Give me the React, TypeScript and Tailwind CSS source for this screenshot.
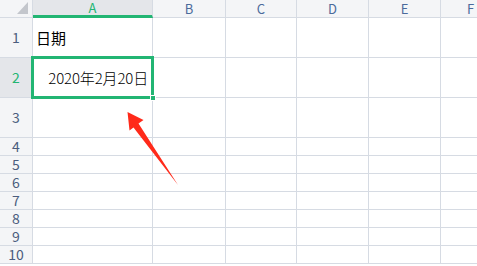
import React from "react";

const cols = [
  { name: "A", w: 120 },
  { name: "B", w: 73 },
  { name: "C", w: 71 },
  { name: "D", w: 72 },
  { name: "E", w: 72 },
  { name: "F", w: 60 },
];

const rows = [
  { n: 1, h: 40 },
  { n: 2, h: 40 },
  { n: 3, h: 40 },
  { n: 4, h: 18 },
  { n: 5, h: 18 },
  { n: 6, h: 18 },
  { n: 7, h: 18 },
  { n: 8, h: 18 },
  { n: 9, h: 18 },
  { n: 10, h: 18 },
];

const font = { fontFamily: '"Noto Sans CJK SC", "Noto Sans", sans-serif' };

export default function App() {
  return (
    <div className="relative w-[477px] h-[266px] overflow-hidden bg-white" style={font}>
      {/* header row */}
      <div className="flex h-[18px]">
        <div className="relative w-[33px] shrink-0 h-[18px] bg-[#f4f5f7] border-r border-b border-[#d6dbe3]">
          <svg className="absolute left-[17px] top-[2px]" width="11" height="12" viewBox="0 0 11 12">
            <polygon points="0,12 11,12 11,0" fill="#c3c6cc" />
          </svg>
        </div>
        {cols.map((c) =>
          c.name === "A" ? (
            <div
              key={c.name}
              className="shrink-0 h-[18px] bg-[#e4e6ea] border-r border-r-[#d6dbe3] border-b-[3px] border-b-[#22b573] flex items-center justify-center text-[13px] leading-[12px] text-[#22b573]"
              style={{ width: c.w }}
            >
              A
            </div>
          ) : (
            <div
              key={c.name}
              className="shrink-0 h-[18px] bg-[#f4f5f7] border-r border-b border-[#d6dbe3] flex items-center justify-center text-[13px] leading-[12px] text-[#4b6a9b]"
              style={{ width: c.w }}
            >
              {c.name}
            </div>
          )
        )}
      </div>
      {rows.map((r) => (
        <div key={r.n} className="flex" style={{ height: r.h }}>
          <div
            className={
              "w-[33px] shrink-0 border-r border-b border-[#d6dbe3] flex items-center justify-center text-[14px] leading-[13px] " +
              (r.n === 2 ? "bg-[#e4e6ea] text-[#22b573]" : "bg-[#f4f5f7] text-[#4b5d7e]")
            }
          >
            {r.n}
          </div>
          {cols.map((c) => (
            <div
              key={c.name}
              className="shrink-0 border-r border-b border-[#d6dbe3] flex items-center text-[15px] leading-none text-black"
              style={{ width: c.w }}
            >
              {c.name === "A" && r.n === 1 && <span className="pl-[3px]">日期</span>}
              {c.name === "A" && r.n === 2 && (
                <span className="w-full text-right pr-[4px] font-light tracking-[-0.15px]">2020年2月20日</span>
              )}
            </div>
          ))}
        </div>
      ))}
      {/* selection box */}
      <div className="absolute left-[31px] top-[56px] w-[123px] h-[43px] border-[3px] border-[#22b573]" />
      <div className="absolute left-[150px] top-[95px] w-[6px] h-[6px] bg-[#22b573] border border-white" />
      {/* red arrow */}
      <svg className="absolute left-0 top-0" width="477" height="266" viewBox="0 0 477 266">
        <polygon
          points="127.5,112 143.5,120 138.5,123.5 178,185 133.5,127.5 129.5,130.5"
          fill="#ff2a1a"
        />
      </svg>
    </div>
  );
}
